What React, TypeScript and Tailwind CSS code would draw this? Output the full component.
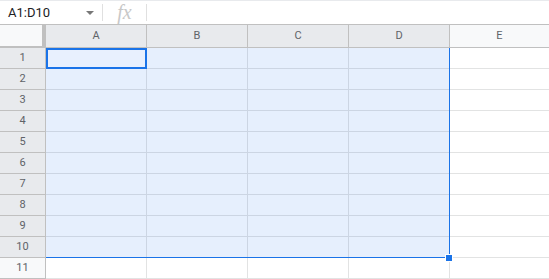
import React from 'react'

const cols = ['A', 'B', 'C', 'D', 'E']
const rows = Array.from({ length: 11 }, (_, i) => i + 1)

export default function App() {
  return (
    <div className="w-[549px] h-[279px] overflow-hidden bg-white font-['Roboto','Liberation_Sans',sans-serif]">
      {/* Formula bar */}
      <div className="h-[25px] border-t border-b border-t-[#e8eaed] border-b-[#c0c0c0] flex items-center">
        <div className="w-[102px] flex items-center pl-[8px] pr-[6px]">
          <span className="text-[13px] text-[#202124] flex-1 leading-none">A1:D10</span>
          <span className="w-0 h-0 border-l-[4px] border-r-[4px] border-t-[4px] border-l-transparent border-r-transparent border-t-[#777] mr-[2px]" />
        </div>
        <div className="w-px h-[17px] bg-[#e0e0e0]" />
        <div className="w-[43px] flex justify-center">
          <span className="text-[20px] leading-none italic text-[#c8c8c8] font-['Liberation_Serif',serif] -mt-[2px]">fx</span>
        </div>
        <div className="w-px h-[17px] bg-[#e0e0e0]" />
      </div>

      {/* Column headers */}
      <div className="flex h-[23px]">
        <div className="w-[46px] h-[23px] bg-[#f8f9fa] border-r-4 border-b-2 border-[#c0c0c0]" />
        {cols.map((c) => (
          <div
            key={c}
            className={
              c === 'E'
                ? 'flex-1 h-[23px] bg-[#f8f9fa] border-b border-[#c0c0c0] flex items-center justify-center text-[11px] text-[#5f6368]'
                : 'w-[101px] h-[23px] bg-[#e8eaed] border-r border-b border-[#c0c0c0] flex items-center justify-center text-[11px] text-[#5f6368]'
            }
          >
            {c}
          </div>
        ))}
      </div>

      {/* Grid body */}
      <div className="relative">
        {rows.map((r) => (
          <div key={r} className="flex h-[21px]">
            <div
              className={
                r <= 10
                  ? 'w-[46px] h-[21px] bg-[#e8eaed] border-r border-b border-[#c0c0c0] flex items-center justify-center text-[11px] text-[#5f6368]'
                  : 'w-[46px] h-[21px] bg-[#f8f9fa] border-r border-b border-[#c0c0c0] flex items-center justify-center text-[11px] text-[#5f6368]'
              }
            >
              {r}
            </div>
            {cols.map((c) => (
              <div
                key={c}
                className={
                  c === 'E'
                    ? 'flex-1 h-[21px] border-b border-[#e2e3e3]'
                    : 'w-[101px] h-[21px] border-r border-b border-[#e2e3e3]'
                }
              />
            ))}
          </div>
        ))}

        {/* Selection overlay */}
        <div className="absolute left-[46px] top-0 w-[403px] h-[209px] bg-[#0e65eb]/10 pointer-events-none" />
        <div className="absolute left-[449px] top-0 w-px h-[210px] bg-[#1a73e8] pointer-events-none" />
        <div className="absolute left-[46px] top-[209px] w-[404px] h-px bg-[#1a73e8] pointer-events-none" />
        {/* Active cell */}
        <div className="absolute left-[46px] top-0 w-[101px] h-[21px] border-2 border-[#1a73e8] bg-[#e8f0fe] pointer-events-none" />
        {/* Fill handle */}
        <div className="absolute left-[445px] top-[206px] w-[8px] h-[8px] bg-[#1a73e8] border border-white pointer-events-none" />
      </div>
    </div>
  )
}
